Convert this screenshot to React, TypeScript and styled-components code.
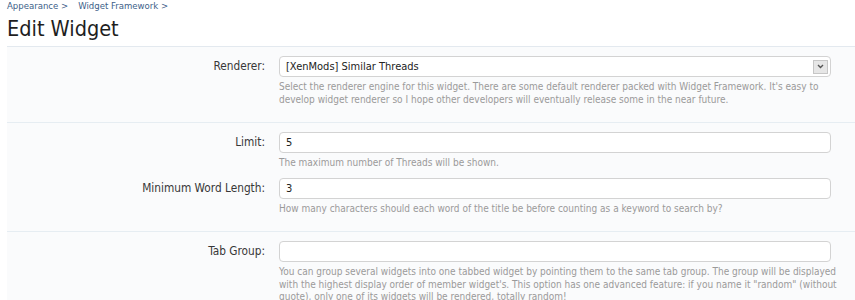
import React from 'react';
import styled, { createGlobalStyle } from 'styled-components';

const GlobalStyle = createGlobalStyle`
  html, body {
    margin: 0;
    padding: 0;
    background: #fff;
  }
  body {
    font-family: "DejaVu Sans Condensed", "DejaVu Sans", sans-serif;
    font-size: 11px;
    color: #222;
  }
`;

const Page = styled.div`
  padding: 0 0 0 7px;
  overflow: hidden;
  height: 300px;
`;

const Breadcrumb = styled.div`
  display: flex;
  gap: 10px;
  font-size: 9.5px;
  line-height: 11px;
  color: #3d6189;
`;

const Crumb = styled.span``;

const Title = styled.h1`
  margin: 0;
  padding: 6px 0 5px;
  font-family: "DejaVu Sans Condensed", "DejaVu Sans", sans-serif;
  font-weight: normal;
  font-size: 21.5px;
  line-height: 24px;
  color: #1e1e1e;
  border-bottom: 1px solid #e3e9ef;
`;

const Form = styled.div`
  background: #fafbfc;
`;

const Section = styled.div`
  padding: 9px 0 16px;
  border-bottom: 1px solid #e6edf2;
  display: flex;
  flex-direction: column;
  gap: 8px;
`;

const Row = styled.div`
  display: grid;
  grid-template-columns: 258px minmax(0, 1fr);
  column-gap: 14px;
  padding-right: 24px;
`;

const Label = styled.div`
  text-align: right;
  font-size: 11.75px;
  line-height: 21px;
  color: #383838;
`;

const Field = styled.div`
  display: flex;
  flex-direction: column;
  min-width: 0;
`;

const TextBox = styled.div`
  box-sizing: border-box;
  height: 21px;
  padding: 0 6px;
  display: flex;
  align-items: center;
  justify-content: space-between;
  background: #fff;
  border: 1px solid #d3d3d3;
  border-radius: 4px;
  font-size: 11px;
  color: #222;
`;

const ArrowButton = styled.span`
  width: 15px;
  height: 14px;
  margin-right: -4px;
  display: flex;
  align-items: center;
  justify-content: center;
  background: #e6e6e6;
  border: 1px solid #c6c6c6;
  box-sizing: border-box;
`;

const Explain = styled.div`
  margin-top: 4px;
  font-size: 10px;
  line-height: 12.5px;
  color: #9a9a9a;
  white-space: nowrap;
`;

type RowProps = { label: string; value?: string; select?: boolean; explain: React.ReactNode };

const FormRow: React.FC<RowProps> = ({ label, value, select, explain }) => (
  <Row>
    <Label>{label}</Label>
    <Field>
      <TextBox>
        <span>{value}</span>
        {select && (
          <ArrowButton>
            <svg width="7" height="5" viewBox="0 0 7 5">
              <path d="M1 1 L3.5 3.5 L6 1" fill="none" stroke="#555" strokeWidth="1.4" />
            </svg>
          </ArrowButton>
        )}
      </TextBox>
      <Explain>{explain}</Explain>
    </Field>
  </Row>
);

export default function App() {
  return (
    <>
      <GlobalStyle />
      <Page>
        <Breadcrumb>
          <Crumb>Appearance &gt;</Crumb>
          <Crumb>Widget Framework &gt;</Crumb>
        </Breadcrumb>
        <Title>Edit Widget</Title>
        <Form>
          <Section>
            <FormRow
              label="Renderer:"
              value="[XenMods] Similar Threads"
              select
              explain={
                <>
                  Select the renderer engine for this widget. There are some default renderer packed with Widget Framework. It's easy to
                  <br />
                  develop widget renderer so I hope other developers will eventually release some in the near future.
                </>
              }
            />
          </Section>
          <Section>
            <FormRow label="Limit:" value="5" explain="The maximum number of Threads will be shown." />
            <FormRow
              label="Minimum Word Length:"
              value="3"
              explain="How many characters should each word of the title be before counting as a keyword to search by?"
            />
          </Section>
          <Section>
            <FormRow
              label="Tab Group:"
              value=""
              explain={
                <>
                  You can group several widgets into one tabbed widget by pointing them to the same tab group. The group will be displayed
                  <br />
                  with the highest display order of member widget's. This option has one advanced feature: if you name it "random" (without
                  <br />
                  quote), only one of its widgets will be rendered, totally random!
                </>
              }
            />
          </Section>
        </Form>
      </Page>
    </>
  );
}
